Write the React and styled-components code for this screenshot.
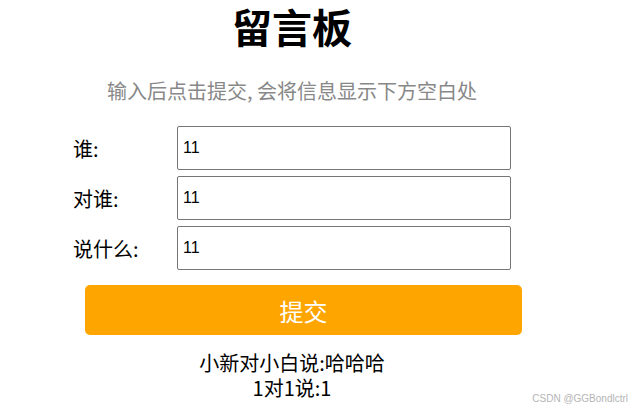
import styled, { createGlobalStyle } from 'styled-components';

const GlobalStyle = createGlobalStyle`
    html, body {
        margin: 0;
        padding: 0;
        background: #fff;
        font-family: "Noto Sans CJK SC", "Liberation Sans", sans-serif;
    }
`;

const Page = styled.div`
    position: relative;
    width: 637px;
    height: 409px;
    overflow: hidden;
`;

const Board = styled.div`
    width: 584px;
    display: flex;
    flex-direction: column;
    align-items: center;
`;

const Title = styled.h1`
    margin: 0;
    font-size: 40px;
    line-height: 52px;
    font-weight: 700;
    color: #000;
`;

const Hint = styled.p`
    margin: 27px 0 0;
    font-size: 20px;
    line-height: 24px;
    color: #888;
`;

const Form = styled.div`
    margin-top: 23px;
    display: flex;
    flex-direction: column;
    gap: 6px;
`;

const Row = styled.div`
    width: 438px;
    display: flex;
    align-items: center;
`;

const Label = styled.span`
    width: 104px;
    font-size: 20px;
    color: #000;
`;

const Field = styled.input`
    box-sizing: border-box;
    width: 334px;
    height: 44px;
    padding: 0 5px;
    border: 1px solid #767676;
    border-radius: 2px;
    font-family: "Liberation Sans", Arial, sans-serif;
    font-size: 16px;
    color: #000;
    outline: none;
`;

const Submit = styled.button`
    align-self: flex-start;
    margin: 15px 0 0 85px;
    width: 437px;
    height: 50px;
    border: none;
    border-radius: 5px;
    background: #ffa500;
    color: #fff;
    font-family: "Noto Sans CJK SC", sans-serif;
    font-size: 24px;
    cursor: pointer;
`;

const Messages = styled.div`
    margin-top: 15px;
    text-align: center;
    font-size: 20px;
    line-height: 25px;
    color: #000;
`;

const Watermark = styled.div`
    position: absolute;
    right: 9px;
    bottom: 5px;
    font-family: "Liberation Sans", sans-serif;
    font-size: 10px;
    color: #b4b4b4;
`;

const rows = [
    { label: '谁:', value: '11' },
    { label: '对谁:', value: '11' },
    { label: '说什么:', value: '11' },
];

const messages = ['小新对小白说:哈哈哈', '1对1说:1'];

export default function App() {
    return (
        <Page>
            <GlobalStyle />
            <Board>
                <Title>留言板</Title>
                <Hint>输入后点击提交, 会将信息显示下方空白处</Hint>
                <Form>
                    {rows.map((r) => (
                        <Row key={r.label}>
                            <Label>{r.label}</Label>
                            <Field defaultValue={r.value} />
                        </Row>
                    ))}
                </Form>
                <Submit>提交</Submit>
                <Messages>
                    {messages.map((m) => (
                        <div key={m}>{m}</div>
                    ))}
                </Messages>
            </Board>
            <Watermark>CSDN @GGBondlctrl</Watermark>
        </Page>
    );
}
